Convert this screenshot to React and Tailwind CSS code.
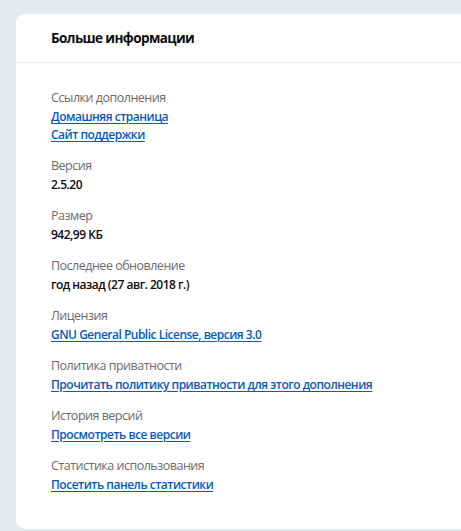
import React from 'react';

const sections = [
  { label: 'Ссылки дополнения', links: ['Домашняя страница', 'Сайт поддержки'] },
  { label: 'Версия', text: '2.5.20' },
  { label: 'Размер', text: '942,99 КБ' },
  { label: 'Последнее обновление', text: 'год назад (27 авг. 2018 г.)' },
  { label: 'Лицензия', links: ['GNU General Public License, версия 3.0'] },
  { label: 'Политика приватности', links: ['Прочитать политику приватности для этого дополнения'] },
  { label: 'История версий', links: ['Просмотреть все версии'] },
  { label: 'Статистика использования', links: ['Посетить панель статистики'] },
];

function App() {
  return (
    <div
      className="min-h-[531px] bg-[#e7eaed] pt-[14px] pl-[16px] overflow-hidden"
      style={{ fontFamily: '"Open Sans", "Noto Sans", sans-serif' }}
    >
      <div className="w-[470px] h-[515px] bg-white rounded-l-[9px]">
        {/* Header */}
        <div className="h-[49px] border-b border-[#ebebeb] pl-[35px] flex items-center">
          <h2 className="text-[13.5px] font-bold text-[#0c0c0d] tracking-[-0.6px] pt-[1px]">Больше информации</h2>
        </div>

        {/* Content */}
        <dl className="pl-[35px] pt-[25px] flex flex-col gap-[12px] leading-[19px]">
          {sections.map((s) => (
            <div key={s.label}>
              <dt className={`text-[12.5px] tracking-[-0.5px] text-[#6b6b6b] ${s.links ? 'mb-[1px]' : ''}`}>
                {s.label}
              </dt>
              {s.text && (
                <dd className="text-[12px] tracking-[-0.5px] font-semibold text-[#0c0c0d]">{s.text}</dd>
              )}
              {s.links &&
                s.links.map((l) => (
                  <dd key={l} className="text-[12px] leading-[18px] tracking-[-0.5px] font-semibold">
                    <a href="#" className="text-[#0a58c0] underline underline-offset-2">
                      {l}
                    </a>
                  </dd>
                ))}
            </div>
          ))}
        </dl>
      </div>
    </div>
  );
}

export default App;
